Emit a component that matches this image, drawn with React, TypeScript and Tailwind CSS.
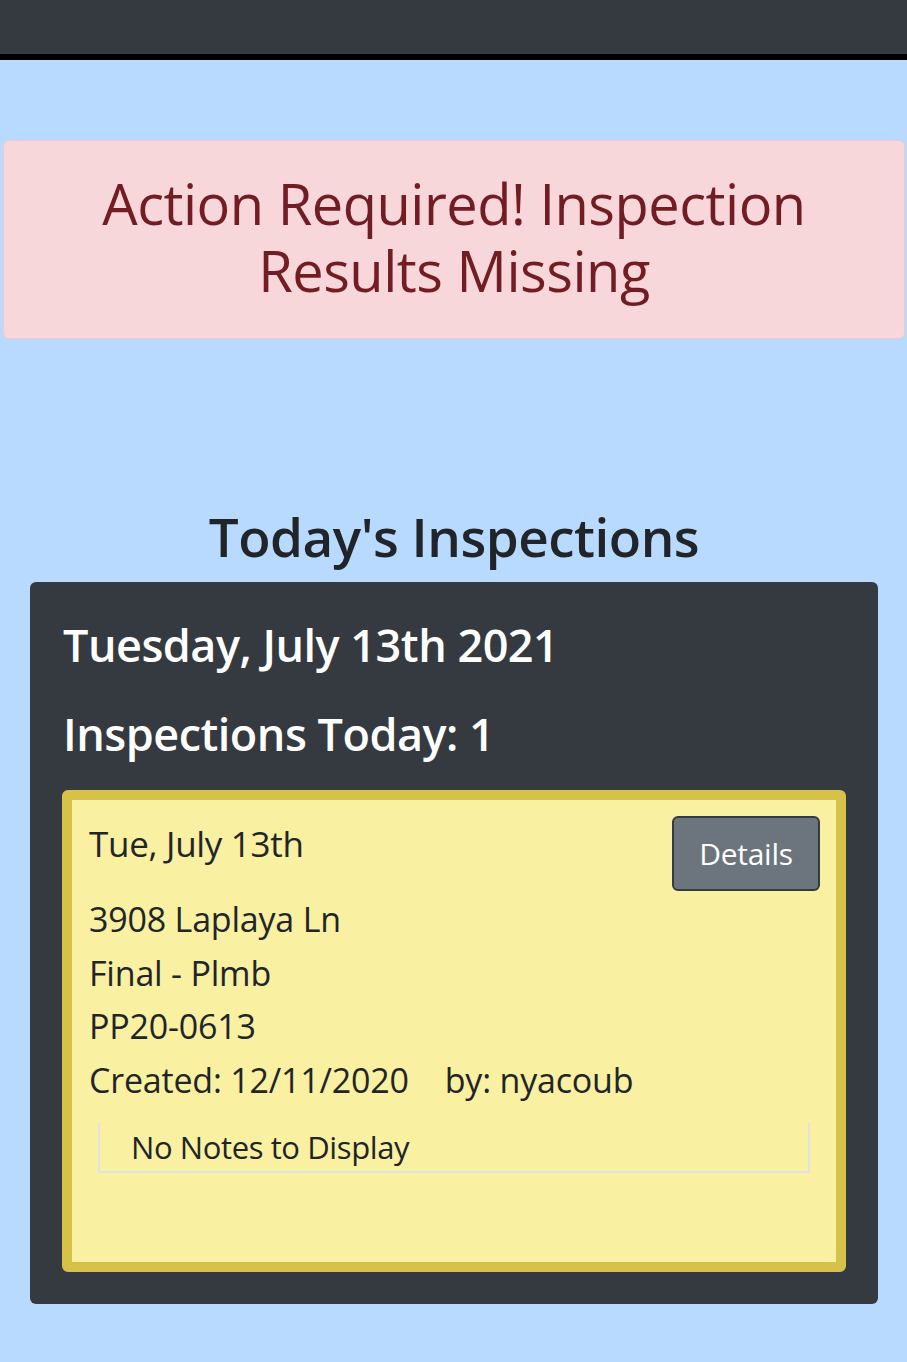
const App = () => {
  return (
    <div
      className="min-h-[1362px] bg-[#b8daff] text-[#212529]"
      style={{ fontFamily: '"Open Sans", "Noto Sans", sans-serif' }}
    >
      <div className="h-[54px] bg-[#343a40] border-b-[6px] border-black box-content" />

      <div className="pt-[80px] px-[3px] pr-[2px]">
        <div className="h-[199px] rounded-[6px] border border-[#f5c6cb] bg-[#f8d7da] flex items-center justify-center text-center">
          <h1 className="text-[56px] leading-[67px] font-medium text-[#721c24] tracking-[-0.5px] px-20 -mt-[6px]">
            Action Required! Inspection Results Missing
          </h1>
        </div>
      </div>

      <div className="pt-[164px] px-[30px] pr-[29px]">
        <h2 className="text-center text-[53px] leading-[67px] pb-[12px] font-semibold tracking-[-0.5px]">
          Today's Inspections
        </h2>

        <div className="rounded-[6px] bg-[#343a40] px-[32px] pt-[33px] pb-[32px]">
          <div className="text-white text-[45px] leading-[60px] font-semibold tracking-[-0.5px] pl-[1px]">
            Tuesday, July 13th 2021
          </div>
          <div className="text-white text-[45px] leading-[60px] font-semibold tracking-[-0.5px] mt-[29px] pl-[1px]">
            Inspections Today: 1
          </div>

          <div className="mt-[26px] rounded-[6px] border-[10px] border-[#d6c248] bg-[#f9f0a1] pl-[17px] pr-[16px] pt-[16px] pb-[89px] text-[#212529]">
            <div className="flex justify-between items-start">
              <div className="text-[35px] leading-[44px] pt-[6px] tracking-[-0.3px]">Tue, July 13th</div>
              <button className="h-[75px] w-[148px] rounded-[6px] border-2 border-[#343a40] bg-[#6c757d] text-white text-[30px] tracking-[-0.3px]">
                Details
              </button>
            </div>
            <div className="text-[34px] leading-[53.5px] tracking-[-0.2px] mt-[2px]">
              <div>3908 Laplaya Ln</div>
              <div>Final - Plmb</div>
              <div>PP20-0613</div>
              <div>
                Created: 12/11/2020<span className="inline-block w-[36px]" />by: nyacoub
              </div>
            </div>
            <div className="ml-[9px] mr-[10px] mt-[16px] h-[50px] border-x-2 border-b-2 border-[#dee2e6] pl-[31px] text-[31px] leading-[48px] tracking-[-0.4px]">
              No Notes to Display
            </div>
          </div>
        </div>
      </div>
    </div>
  );
};

export default App;
